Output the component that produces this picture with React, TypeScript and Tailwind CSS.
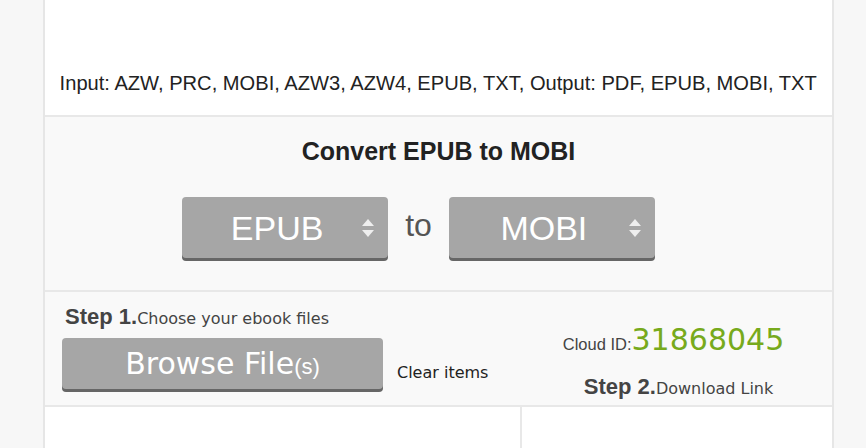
import React from 'react';

function SelectBox({ label }: { label: string }) {
  return (
    <div className="relative w-[206px] h-[61px] rounded-[4px] bg-[#a6a6a6] shadow-[0_3px_0_#666] flex items-center">
      <span className="w-full pr-[16px] text-center text-white text-[34px] leading-none [font-family:'Liberation_Sans',Arial,sans-serif]">
        {label}
      </span>
      <svg className="absolute right-[13px] top-[21px]" width="14" height="20" viewBox="0 0 14 20">
        <path d="M7 1 L13 8 H1 Z" fill="#eeeeee" />
        <path d="M7 19 L13 12 H1 Z" fill="#eeeeee" />
      </svg>
    </div>
  );
}

export default function App() {
  return (
    <div className="w-[866px] h-[448px] overflow-hidden bg-[#f7f7f7]">
      <div className="ml-[43px] w-[791px] h-full border-x-2 border-[#e6e6e6] bg-white flex flex-col">
        <div className="h-[115px] flex items-end justify-center pb-[17px] bg-white">
          <p className="text-[21px] text-[#222] scale-x-[0.958] whitespace-nowrap [font-family:'Liberation_Sans',Arial,sans-serif]">
            Input: AZW, PRC, MOBI, AZW3, AZW4, EPUB, TXT, Output: PDF, EPUB, MOBI, TXT
          </p>
        </div>

        <div className="h-[175px] border-t-2 border-[#e8e8e8] bg-[#f9f9f9] flex flex-col items-center">
          <h2 className="mt-[19px] text-[25px] leading-[30px] font-bold text-[#222] [font-family:'Liberation_Sans',Arial,sans-serif]">
            Convert EPUB to MOBI
          </h2>
          <div className="mt-[31px] mr-[40px] flex items-center gap-[17px]">
            <SelectBox label="EPUB" />
            <span className="text-[32px] text-[#555] -mt-[6px] [font-family:'Liberation_Sans',Arial,sans-serif]">to</span>
            <SelectBox label="MOBI" />
          </div>
        </div>

        <div className="h-[115px] border-t-2 border-[#e8e8e8] bg-[#f9f9f9] flex">
          <div className="w-[476px] pl-[20px] pt-[14px]">
            <p className="text-[#444] leading-none flex items-baseline">
              <span className="text-[22px] font-bold [font-family:'Liberation_Sans',Arial,sans-serif]">Step 1.</span>
              <span className="text-[16px] [font-family:'DejaVu_Sans',Verdana,sans-serif]">Choose your ebook files</span>
            </p>
            <div className="mt-[10px] -ml-[3px] flex items-end gap-[14px]">
              <button className="w-[321px] h-[51px] rounded-[4px] bg-[#a6a6a6] shadow-[0_3px_0_#666] text-white flex items-baseline justify-center pt-[8px]">
                <span className="text-[30px] leading-[36px] [font-family:'DejaVu_Sans',Verdana,sans-serif]">Browse File</span>
                <span className="text-[22px] [font-family:'Liberation_Sans',Arial,sans-serif]">(s)</span>
              </button>
              <span className="mb-[4px] text-[16px] text-[#222] [font-family:'DejaVu_Sans',Verdana,sans-serif]">Clear items</span>
            </div>
          </div>
          <div className="flex-1 flex flex-col items-center pt-[33px] pr-[6px]">
            <p className="flex items-baseline">
              <span className="text-[16.5px] text-[#444] [font-family:'Liberation_Sans',Arial,sans-serif]">Cloud ID:</span>
              <span className="text-[30px] leading-none text-[#77aa1c] [font-family:'DejaVu_Sans',Verdana,sans-serif]">31868045</span>
            </p>
            <p className="mt-[19px] ml-[10px] text-[#444] leading-none flex items-baseline">
              <span className="text-[22px] font-bold [font-family:'Liberation_Sans',Arial,sans-serif]">Step 2.</span>
              <span className="text-[16px] [font-family:'DejaVu_Sans',Verdana,sans-serif]">Download Link</span>
            </p>
          </div>
        </div>

        <div className="flex-1 border-t-2 border-[#e8e8e8] bg-white flex">
          <div className="w-[477px] border-r-2 border-[#e8e8e8]" />
          <div className="flex-1" />
        </div>
      </div>
    </div>
  );
}
